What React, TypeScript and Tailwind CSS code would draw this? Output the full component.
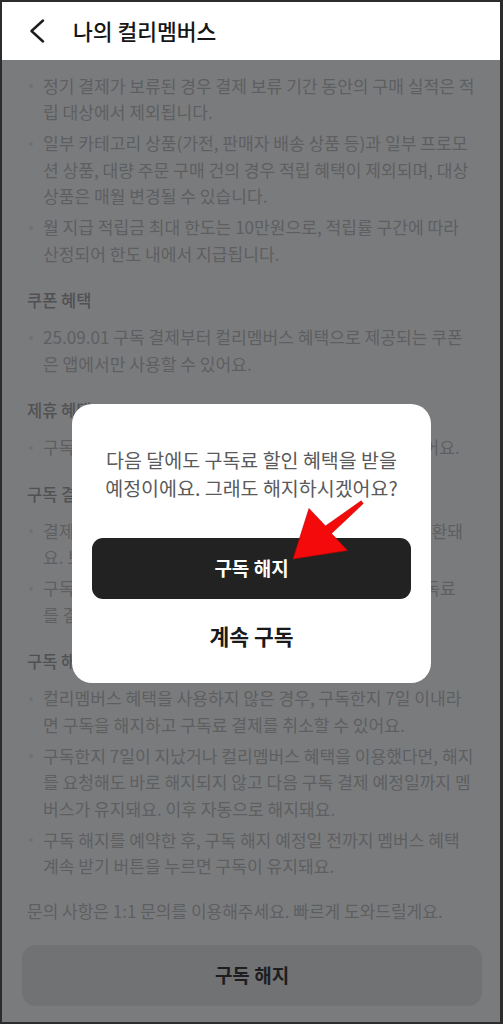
import React from "react";

type Block =
  | { kind: "bullet"; lines: string[] }
  | { kind: "heading"; text: string };

const blocks: Block[] = [
  { kind: "bullet", lines: ["정기 결제가 보류된 경우 결제 보류 기간 동안의 구매 실적은 적", "립 대상에서 제외됩니다."] },
  {
    kind: "bullet",
    lines: [
      "일부 카테고리 상품(가전, 판매자 배송 상품 등)과 일부 프로모",
      "션 상품, 대량 주문 구매 건의 경우 적립 혜택이 제외되며, 대상",
      "상품은 매월 변경될 수 있습니다.",
    ],
  },
  { kind: "bullet", lines: ["월 지급 적립금 최대 한도는 10만원으로, 적립률 구간에 따라", "산정되어 한도 내에서 지급됩니다."] },
  { kind: "heading", text: "쿠폰 혜택" },
  { kind: "bullet", lines: ["25.09.01 구독 결제부터 컬리멤버스 혜택으로 제공되는 쿠폰", "은 앱에서만 사용할 수 있어요."] },
  { kind: "heading", text: "제휴 혜택" },
  { kind: "bullet", lines: ["구독 중에는 제휴사 혜택을 추가 비용 없이 이용할 수 있어요."] },
  { kind: "heading", text: "구독 결제" },
  { kind: "bullet", lines: ["결제 오류로 구독료 결제에 실패하시면 일반 회원으로 전환돼", "요. 보유 혜택은 결제가 완료되면 다시 이용할 수 있어요."] },
  { kind: "bullet", lines: ["구독 결제일은 매월 최초 결제일과 같으며, 해당 일에 구독료", "를 결제해요."] },
  { kind: "heading", text: "구독 해지" },
  { kind: "bullet", lines: ["컬리멤버스 혜택을 사용하지 않은 경우, 구독한지 7일 이내라", "면 구독을 해지하고 구독료 결제를 취소할 수 있어요."] },
  {
    kind: "bullet",
    lines: [
      "구독한지 7일이 지났거나 컬리멤버스 혜택을 이용했다면, 해지",
      "를 요청해도 바로 해지되지 않고 다음 구독 결제 예정일까지 멤",
      "버스가 유지돼요. 이후 자동으로 해지돼요.",
    ],
  },
  { kind: "bullet", lines: ["구독 해지를 예약한 후, 구독 해지 예정일 전까지 멤버스 혜택", "계속 받기 버튼을 누르면 구독이 유지돼요."] },
];

const font = { fontFamily: '"Noto Sans CJK KR", "Noto Sans", sans-serif' };

export default function App() {
  let prev: Block["kind"] | null = null;
  return (
    <div className="relative w-[503px] h-[1024px] overflow-hidden bg-[#2c2c2c] pt-[2px] pl-[2px] pr-[3px] pb-[2px]" style={font}>
      <div className="flex flex-col h-full bg-[#7a7b7d]">
        {/* Header */}
        <div className="h-[58px] shrink-0 bg-white flex items-center">
          <svg width="16" height="24" viewBox="0 0 16 24" className="ml-[27px]">
            <polyline points="14,1.5 2.5,12 14,22.5" fill="none" stroke="#1c1c1c" strokeWidth="2.4" strokeLinecap="round" strokeLinejoin="round" />
          </svg>
          <span className="ml-[28px] text-[21.5px] font-medium text-[#161616]">나의 컬리멤버스</span>
        </div>

        {/* Content */}
        <div className="flex-1 flex flex-col pl-[25px] pr-[10px] pt-[12.75px]">
          {blocks.map((b, i) => {
            const p = prev;
            prev = b.kind;
            if (b.kind === "heading") {
              return (
                <div key={i} className="mt-[20px] text-[16.5px] leading-[26px] font-medium text-[#505153]">
                  {b.text}
                </div>
              );
            }
            const mt = p === null ? "mt-0" : p === "heading" ? "mt-[11px]" : "mt-[4.5px]";
            return (
              <div key={i} className={`flex ${mt}`}>
                <div className="w-[16px] shrink-0 h-[26.5px] flex items-center">
                  <span className="ml-[2px] w-[4px] h-[4px] rounded-full bg-[#707173]" />
                </div>
                <div className="flex flex-col text-[17.1px] leading-[26.5px] text-[#5e5f61]">
                  {b.lines.map((l, j) => (
                    <span key={j} className="whitespace-nowrap">
                      {l}
                    </span>
                  ))}
                </div>
              </div>
            );
          })}
          <div className="mt-[18px] text-[17px] leading-[26px] text-[#5e5f61] whitespace-nowrap">
            문의 사항은 1:1 문의를 이용해주세요. 빠르게 도와드릴게요.
          </div>
        </div>

        {/* Bottom button */}
        <div className="shrink-0 ml-[20px] mr-[18px] mb-[16px] h-[61px] rounded-[14px] bg-[#717274] flex items-center justify-center">
          <span className="text-[19px] font-bold text-[#1e1e20]">구독 해지</span>
        </div>
      </div>

      {/* Dialog */}
      <div className="absolute left-[72px] top-[404px] w-[359px] h-[279px] rounded-[20px] bg-white flex flex-col px-[20px] pt-[42px]">
        <div className="text-center text-[19.5px] leading-[28px] text-[#5a5a5a]">
          <div className="whitespace-nowrap">다음 달에도 구독료 할인 혜택을 받을</div>
          <div className="whitespace-nowrap">예정이에요. 그래도 해지하시겠어요?</div>
        </div>
        <div className="mt-[36px] h-[61px] rounded-[11px] bg-[#222222] flex items-center justify-center">
          <span className="text-[19px] font-semibold text-white">구독 해지</span>
        </div>
        <div className="mt-[7px] h-[60px] flex items-center justify-center">
          <span className="text-[21.5px] font-bold text-[#1a1a1a]">계속 구독</span>
        </div>
      </div>

      {/* Red arrow annotation */}
      <svg className="absolute left-0 top-0" width="503" height="1024" viewBox="0 0 503 1024">
        <polygon
          points="293,559 309,508.5 325.5,526 361.2,500.8 363.2,503.6 331.5,533.5 347.5,550.5"
          fill="#f40a0a"
          stroke="#c00000"
          strokeWidth="0.6"
          strokeLinejoin="round"
        />
      </svg>
    </div>
  );
}
